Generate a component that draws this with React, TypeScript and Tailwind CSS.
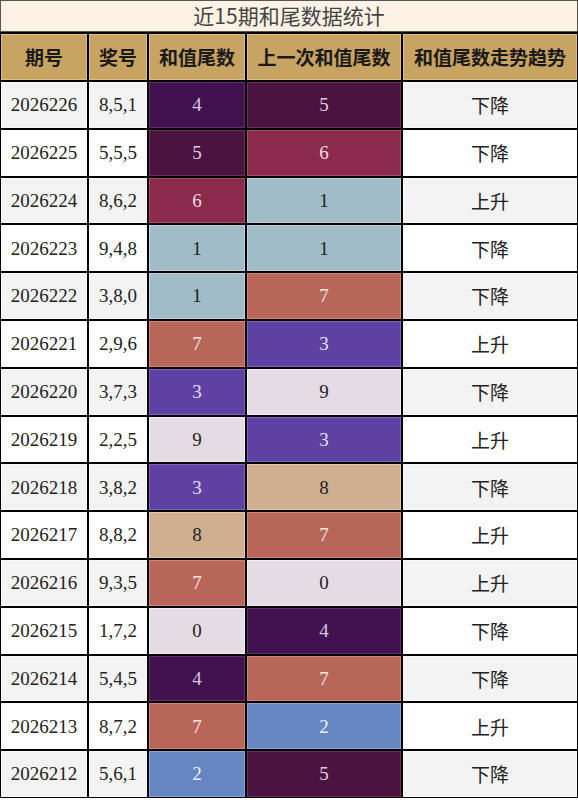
import React from "react";

const rows: [string, string, number, number, string][] = [
  ["2026226", "8,5,1", 4, 5, "下降"],
  ["2026225", "5,5,5", 5, 6, "下降"],
  ["2026224", "8,6,2", 6, 1, "上升"],
  ["2026223", "9,4,8", 1, 1, "下降"],
  ["2026222", "3,8,0", 1, 7, "下降"],
  ["2026221", "2,9,6", 7, 3, "上升"],
  ["2026220", "3,7,3", 3, 9, "下降"],
  ["2026219", "2,2,5", 9, 3, "上升"],
  ["2026218", "3,8,2", 3, 8, "下降"],
  ["2026217", "8,8,2", 8, 7, "上升"],
  ["2026216", "9,3,5", 7, 0, "上升"],
  ["2026215", "1,7,2", 0, 4, "下降"],
  ["2026214", "5,4,5", 4, 7, "下降"],
  ["2026213", "8,7,2", 7, 2, "上升"],
  ["2026212", "5,6,1", 2, 5, "下降"],
];

const colorCls: Record<number, string> = {
  0: "bg-[#e4dbe4] border-[#f2eef2] text-[#222]",
  1: "bg-[#9fbcc8] border-[#bcd2dc] text-[#222]",
  2: "bg-[#6586c0] border-[#8aa5d4] text-[#eef2fa]",
  3: "bg-[#5e41a2] border-[#7e66b8] text-[#e6e0f4]",
  4: "bg-[#42114f] border-[#5e3068] text-[#d6c8e0]",
  5: "bg-[#4b1440] border-[#66305a] text-[#e0cde0]",
  6: "bg-[#8c2a4d] border-[#a44c68] text-[#f0dce4]",
  7: "bg-[#b8655a] border-[#d08476] text-[#f8e8e4]",
  8: "bg-[#d0ae90] border-[#e2c8b0] text-[#222]",
  9: "bg-[#e4dbe4] border-[#f2eef2] text-[#222]",
};

const serif = "font-['Liberation_Serif','Noto_Sans_CJK_SC',serif]";
const sans = "font-['Noto_Sans_CJK_SC','Noto_Sans',sans-serif]";

export default function App() {
  const headers = ["期号", "奖号", "和值尾数", "上一次和值尾数", "和值尾数走势趋势"];
  return (
    <div className="w-[578px] h-[800px] bg-white overflow-hidden">
      <div className="bg-black">
        <div
          className={`h-[32px] bg-[#fdf2e4] border border-[#555] flex items-center justify-center text-[21px] text-[#444] ${sans}`}
        >
          近15期和尾数据统计
        </div>
        <div className="grid grid-cols-[86px_58px_96px_154px_174px] gap-[2px] p-[1px] pt-[2px]">
          {headers.map((h) => (
            <div
              key={h}
              className={`h-[46px] bg-[#c8a462] border border-[#dcc088] flex items-center justify-center text-[19px] font-bold text-[#1a1a1a] ${sans}`}
            >
              {h}
            </div>
          ))}
          {rows.map((r, i) => {
            const base = i % 2 === 0 ? "bg-[#f3f3f3] border-[#fafafa]" : "bg-white border-white";
            return (
              <React.Fragment key={r[0]}>
                <div className={`h-[45.8px] pt-[1px] border ${base} flex items-center justify-center text-[19px] text-[#222] ${serif}`}>
                  {r[0]}
                </div>
                <div className={`h-[45.8px] pt-[1px] border ${base} flex items-center justify-center text-[19px] text-[#222] ${serif}`}>
                  {r[1]}
                </div>
                <div className={`h-[45.8px] pt-[1px] border ${colorCls[r[2]]} flex items-center justify-center text-[19px] ${serif}`}>
                  {r[2]}
                </div>
                <div className={`h-[45.8px] pt-[1px] border ${colorCls[r[3]]} flex items-center justify-center text-[19px] ${serif}`}>
                  {r[3]}
                </div>
                <div className={`h-[45.8px] pt-[1px] border ${base} flex items-center justify-center text-[19px] text-[#222] ${sans}`}>
                  {r[4]}
                </div>
              </React.Fragment>
            );
          })}
        </div>
      </div>
    </div>
  );
}
